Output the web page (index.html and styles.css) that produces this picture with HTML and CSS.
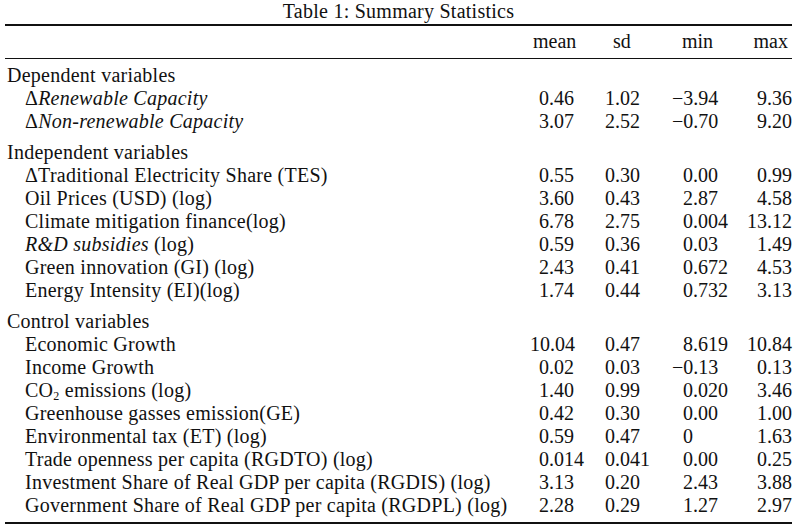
FILE: index.html
```html
<!DOCTYPE html>
<html>
<head>
<meta charset="utf-8">
<link rel="stylesheet" href="styles.css">
</head>
<body>
<div class="page">
  <div class="caption">Table 1: Summary Statistics</div>
  <div class="tbl">
    <div class="row head">
      <div class="lab"></div>
      <div class="c-mean h">mean</div>
      <div class="c-sd h">sd</div>
      <div class="c-min h">min</div>
      <div class="c-max h">max</div>
    </div>
    <div class="body">
      <div class="group first">
        <div class="row"><div class="lab grp">Dependent variables</div><div></div><div></div><div></div><div></div></div>
        <div class="row"><div class="lab item">Δ<i>Renewable Capacity</i></div><div class="c-mean">0.46</div><div class="c-sd">1.02</div><div class="c-min neg">−3.94</div><div class="c-max">9.36</div></div>
        <div class="row"><div class="lab item">Δ<i>Non-renewable Capacity</i></div><div class="c-mean">3.07</div><div class="c-sd">2.52</div><div class="c-min neg">−0.70</div><div class="c-max">9.20</div></div>
      </div>
      <div class="group">
        <div class="row"><div class="lab grp">Independent variables</div><div></div><div></div><div></div><div></div></div>
        <div class="row"><div class="lab item">ΔTraditional Electricity Share (TES)</div><div class="c-mean">0.55</div><div class="c-sd">0.30</div><div class="c-min">0.00</div><div class="c-max">0.99</div></div>
        <div class="row"><div class="lab item">Oil Prices (USD) (log)</div><div class="c-mean">3.60</div><div class="c-sd">0.43</div><div class="c-min">2.87</div><div class="c-max">4.58</div></div>
        <div class="row"><div class="lab item">Climate mitigation finance(log)</div><div class="c-mean">6.78</div><div class="c-sd">2.75</div><div class="c-min">0.004</div><div class="c-max">13.12</div></div>
        <div class="row"><div class="lab item"><i>R&amp;D subsidies</i> (log)</div><div class="c-mean">0.59</div><div class="c-sd">0.36</div><div class="c-min">0.03</div><div class="c-max">1.49</div></div>
        <div class="row"><div class="lab item">Green innovation (GI) (log)</div><div class="c-mean">2.43</div><div class="c-sd">0.41</div><div class="c-min">0.672</div><div class="c-max">4.53</div></div>
        <div class="row"><div class="lab item">Energy Intensity (EI)(log)</div><div class="c-mean">1.74</div><div class="c-sd">0.44</div><div class="c-min">0.732</div><div class="c-max">3.13</div></div>
      </div>
      <div class="group">
        <div class="row"><div class="lab grp">Control variables</div><div></div><div></div><div></div><div></div></div>
        <div class="row"><div class="lab item">Economic Growth</div><div class="c-mean wide">10.04</div><div class="c-sd">0.47</div><div class="c-min">8.619</div><div class="c-max">10.84</div></div>
        <div class="row"><div class="lab item">Income Growth</div><div class="c-mean">0.02</div><div class="c-sd">0.03</div><div class="c-min neg">−0.13</div><div class="c-max">0.13</div></div>
        <div class="row"><div class="lab item">CO<sub>2</sub> emissions (log)</div><div class="c-mean">1.40</div><div class="c-sd">0.99</div><div class="c-min">0.020</div><div class="c-max">3.46</div></div>
        <div class="row"><div class="lab item">Greenhouse gasses emission(GE)</div><div class="c-mean">0.42</div><div class="c-sd">0.30</div><div class="c-min">0.00</div><div class="c-max">1.00</div></div>
        <div class="row"><div class="lab item">Environmental tax (ET) (log)</div><div class="c-mean">0.59</div><div class="c-sd">0.47</div><div class="c-min">0</div><div class="c-max">1.63</div></div>
        <div class="row"><div class="lab item">Trade openness per capita (RGDTO) (log)</div><div class="c-mean">0.014</div><div class="c-sd">0.041</div><div class="c-min">0.00</div><div class="c-max">0.25</div></div>
        <div class="row"><div class="lab item">Investment Share of Real GDP per capita (RGDIS) (log)</div><div class="c-mean">3.13</div><div class="c-sd">0.20</div><div class="c-min">2.43</div><div class="c-max">3.88</div></div>
        <div class="row"><div class="lab item">Government Share of Real GDP per capita (RGDPL) (log)</div><div class="c-mean">2.28</div><div class="c-sd">0.29</div><div class="c-min">1.27</div><div class="c-max">2.97</div></div>
      </div>
    </div>
  </div>
</div>
</body>
</html>
```

FILE: styles.css
```css
html, body {
  margin: 0;
  padding: 0;
  background: #fff;
}
.page {
  width: 787px;
  padding-left: 5px;
  font-family: "Liberation Serif", "Times New Roman", serif;
  font-size: 20px;
  line-height: 23px;
  color: #111;
}
.caption {
  text-align: center;
  height: 23px;
  margin-bottom: 1px;
  letter-spacing: 0.25px;
}
.tbl {
  border-top: 2px solid #111;
  border-bottom: 2px solid #111;
}
.row {
  display: grid;
  grid-template-columns: 525px 60px 70px 80px 52px;
  height: 23px;
  white-space: nowrap;
}
.head {
  padding-top: 4px;
  padding-bottom: 5px;
  border-bottom: 1px solid #111;
}
.body {
  padding-top: 5px;
  padding-bottom: 5px;
}
.group {
  padding-top: 8px;
}
.group.first {
  padding-top: 0;
}
.lab {
  letter-spacing: 0.25px;
}
.grp {
  padding-left: 2px;
}
.item {
  padding-left: 20px;
}
.c-mean { padding-left: 9px; }
.c-mean.wide { padding-left: 0; }
.c-mean.h { padding-left: 3px; }
.c-sd { padding-left: 15px; }
.c-sd.h { padding-left: 23px; }
.c-min { padding-left: 23px; }
.c-min.neg { padding-left: 12px; }
.c-min.h { padding-left: 22px; }
.c-max { text-align: right; }
.c-max.h { padding-right: 4px; }
sub {
  font-size: 12px;
  line-height: 0;
  vertical-align: -3px;
}
```
